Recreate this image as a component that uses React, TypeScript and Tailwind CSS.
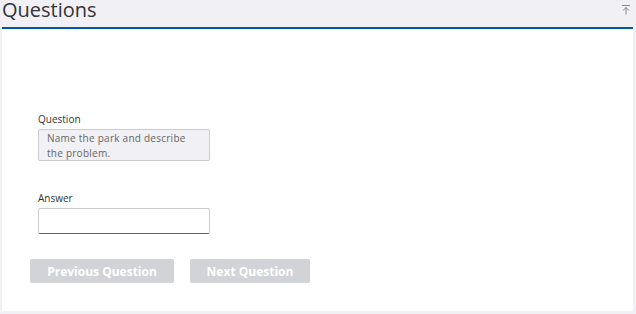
const App = () => {
  return (
    <div className="w-[636px] h-[314px] bg-[#f0f0f5] flex flex-col" style={{ fontFamily: "'Open Sans', sans-serif" }}>
      {/* Header */}
      <div className="h-[27px] flex items-start justify-between">
        <h1 className="text-[20px] leading-[24px] text-[#333] pl-[2px] -mt-[2px]">Questions</h1>
        <button className="mr-[5px] mt-[5px] w-[10px] h-[10px] text-[#888]">
          <svg viewBox="0 0 10 10" width="10" height="10" fill="none" stroke="currentColor" strokeWidth="1">
            <path d="M1 0.5H9" />
            <path d="M5 9.5V2.5M2 5.5L5 2.5L8 5.5" />
          </svg>
        </button>
      </div>

      {/* Panel */}
      <div className="ml-[2px] w-[631px] h-[284px] bg-white border-t-2 border-[#005a9e] flex flex-col">
        <div className="pl-[36px] pt-[84px] flex flex-col">
          <label className="text-[10px] leading-[12px] text-[#333]">Question</label>
          <div className="mt-[4px] w-[172px] h-[32px] bg-[#f0f0f5] border border-[#ccc] rounded-[2px] pl-[8px] pr-[14px] pt-px text-[10px] leading-[15px] tracking-[0.25px] text-[#666]">
            Name the park and describe the problem.
          </div>

          <label className="mt-[31px] text-[10px] leading-[12px] text-[#333]">Answer</label>
          <input
            type="text"
            className="mt-[4px] w-[172px] h-[26px] bg-white border border-[#ccc] border-b-[#666] rounded-[2px] outline-none"
          />
        </div>

        <div className="pl-[28px] pt-[25px] flex gap-[16px]">
          <button className="w-[144px] h-[24px] bg-[#d2d3d7] rounded-[2px] text-white text-[12px] leading-[26px] font-bold">
            Previous Question
          </button>
          <button className="w-[120px] h-[24px] bg-[#d2d3d7] rounded-[2px] text-white text-[12px] leading-[26px] font-bold">
            Next Question
          </button>
        </div>
      </div>
    </div>
  );
};

export default App;
